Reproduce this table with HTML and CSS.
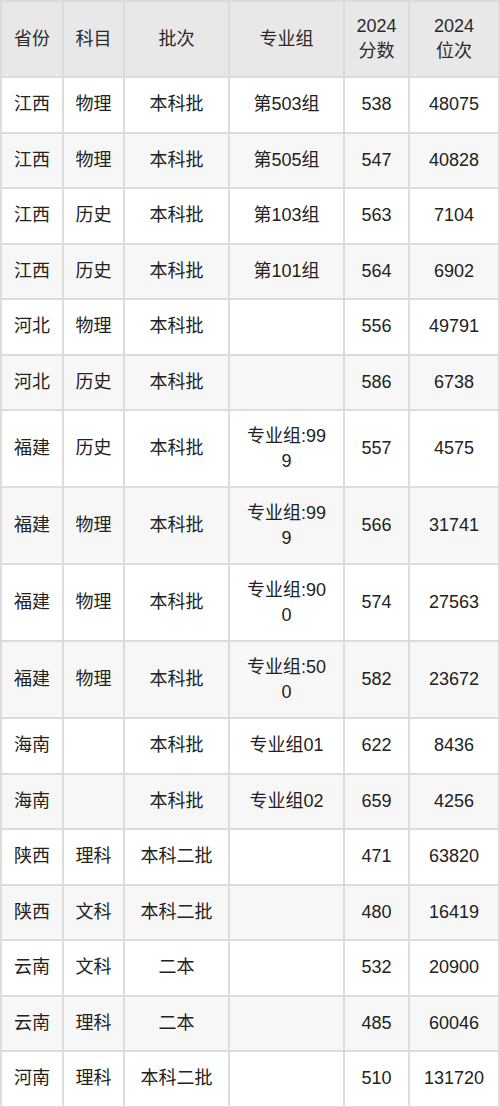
FILE: index.html
```html
<!DOCTYPE html>
<html lang="zh-CN">
<head>
<meta charset="utf-8">
<link rel="stylesheet" href="styles.css">
</head>
<body>
<table class="score-table">
  <colgroup>
    <col class="c1"><col class="c2"><col class="c3"><col class="c4"><col class="c5"><col class="c6">
  </colgroup>
  <thead>
    <tr><th>省份</th><th>科目</th><th>批次</th><th class="grp">专业组</th><th>2024<br>分数</th><th>2024<br>位次</th></tr>
  </thead>
  <tbody>
    <tr><td>江西</td><td>物理</td><td>本科批</td><td class="grp">第503组</td><td>538</td><td>48075</td></tr>
    <tr><td>江西</td><td>物理</td><td>本科批</td><td class="grp">第505组</td><td>547</td><td>40828</td></tr>
    <tr><td>江西</td><td>历史</td><td>本科批</td><td class="grp">第103组</td><td>563</td><td>7104</td></tr>
    <tr><td>江西</td><td>历史</td><td>本科批</td><td class="grp">第101组</td><td>564</td><td>6902</td></tr>
    <tr><td>河北</td><td>物理</td><td>本科批</td><td class="grp"></td><td>556</td><td>49791</td></tr>
    <tr><td>河北</td><td>历史</td><td>本科批</td><td class="grp"></td><td>586</td><td>6738</td></tr>
    <tr class="tall"><td>福建</td><td>历史</td><td>本科批</td><td class="grp">专业组:999</td><td>557</td><td>4575</td></tr>
    <tr class="tall"><td>福建</td><td>物理</td><td>本科批</td><td class="grp">专业组:999</td><td>566</td><td>31741</td></tr>
    <tr class="tall"><td>福建</td><td>物理</td><td>本科批</td><td class="grp">专业组:900</td><td>574</td><td>27563</td></tr>
    <tr class="tall"><td>福建</td><td>物理</td><td>本科批</td><td class="grp">专业组:500</td><td>582</td><td>23672</td></tr>
    <tr><td>海南</td><td></td><td>本科批</td><td class="grp">专业组01</td><td>622</td><td>8436</td></tr>
    <tr><td>海南</td><td></td><td>本科批</td><td class="grp">专业组02</td><td>659</td><td>4256</td></tr>
    <tr><td>陕西</td><td>理科</td><td>本科二批</td><td class="grp"></td><td>471</td><td>63820</td></tr>
    <tr><td>陕西</td><td>文科</td><td>本科二批</td><td class="grp"></td><td>480</td><td>16419</td></tr>
    <tr><td>云南</td><td>文科</td><td>二本</td><td class="grp"></td><td>532</td><td>20900</td></tr>
    <tr><td>云南</td><td>理科</td><td>二本</td><td class="grp"></td><td>485</td><td>60046</td></tr>
    <tr><td>河南</td><td>理科</td><td>本科二批</td><td class="grp"></td><td>510</td><td>131720</td></tr>
  </tbody>
</table>
</body>
</html>
```

FILE: styles.css
```css
html, body {
  margin: 0;
  padding: 0;
  background: #ffffff;
}

.score-table {
  width: 498px;
  table-layout: fixed;
  border-collapse: collapse;
  font-family: "Liberation Sans", "Noto Sans CJK SC", sans-serif;
  font-size: 18px;
  line-height: 25px;
  color: #222222;
}

.c1 { width: 62px; }
.c2 { width: 61px; }
.c3 { width: 105px; }
.c4 { width: 115px; }
.c5 { width: 65px; }
.c6 { width: 90px; }

.score-table th,
.score-table td {
  border: 2px solid #dcdcdc;
  text-align: center;
  vertical-align: middle;
  padding: 0 6px;
  word-break: break-all;
}

.score-table th {
  background: #e8e8e8;
  font-weight: normal;
  color: #2a2a2a;
  height: 74px;
}

.score-table tbody tr {
  height: 55.5px;
}

.score-table tbody tr.tall {
  height: 77px;
}

.score-table tbody tr:nth-child(even) {
  background: #f7f7f7;
}

.score-table .grp {
  padding: 0 15px;
}
```
